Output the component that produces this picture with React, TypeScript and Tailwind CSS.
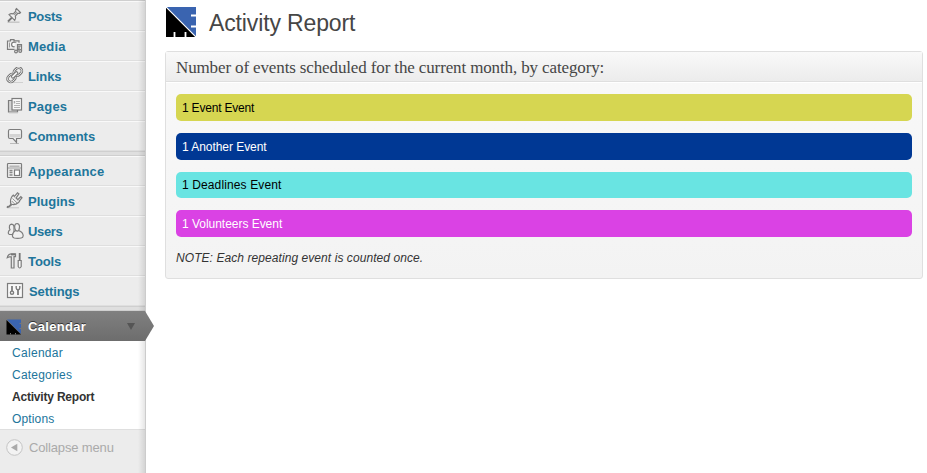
import React from "react";

const stroke = { fill: "none", stroke: "#7c7c7c", strokeWidth: 1.2 } as const;

const icons: Record<string, React.ReactNode> = {
  Posts: (
    <>
      <path d="M1.500 15.200h12" stroke="#c4c4c4" strokeWidth="1.400" />
      <path d="M2 14.500 6.500 10" stroke="#777" strokeWidth="1.800" />
      <path d="M3 7.600q2-1.700 4.300-.7l2.500-2.700q-.6-1.500.7-2.700l4 4q-1.200 1.400-2.700.8L9.300 9q1 2.300-.6 4.300z" {...stroke} fill="#eee" />
      <path d="m8.200 7.800 2.600-2.700" stroke="#999" strokeWidth="1.300" />
    </>
  ),
  Media: (
    <>
      <path d="M1.500 4h3V2.600h3.500v1.200h5v8.500h-11.500z" {...stroke} fill="#f1f1f1" />
      <circle cx="8" cy="7.500" r="2.400" {...stroke} fill="#fff" />
      <path d="M3.500 5.500v5" stroke="#999" />
      <path d="M10.200 15V7.300h5.500v6" stroke="#ececec" strokeWidth="3.200" fill="none" />
      <path d="M11.500 14.500V7.500h4v6.500M11.500 9h4" {...stroke} />
      <circle cx="10" cy="14.500" r="1.400" {...stroke} fill="#eee" />
      <circle cx="14.200" cy="14" r="1.400" {...stroke} fill="#eee" />
    </>
  ),
  Links: (
    <>
      <path d="M4 15.500h13" stroke="#d0d0d0" />
      <g transform="rotate(-45 8.500 8)">
        <rect x="0" y="4.800" width="8.500" height="6.400" rx="3" {...stroke} strokeWidth="2.600" stroke="#777" />
        <rect x="0" y="4.800" width="8.500" height="6.400" rx="3" {...stroke} strokeWidth=".9" stroke="#eee" />
        <rect x="9" y="4.800" width="8.500" height="6.400" rx="3" {...stroke} strokeWidth="2.600" stroke="#777" />
        <rect x="9" y="4.800" width="8.500" height="6.400" rx="3" {...stroke} strokeWidth=".9" stroke="#eee" />
        <rect x="4.800" y="6.600" width="7.800" height="2.800" rx="1.400" fill="#f5f5f5" stroke="#777" />
      </g>
    </>
  ),
  Pages: (
    <>
      <path d="M6 3.500H2.500v11.500h9V13" {...stroke} fill="#d5d5d5" />
      <path d="M3 16h9" stroke="#cfcfcf" />
      <rect x="6" y="1.500" width="9.500" height="11.500" {...stroke} fill="#f8f8f8" />
      <path d="M10 4.500h4M10 6.500h4M8 8.500h6M8 10.500h6" stroke="#aaa" strokeWidth=".9" />
      <path d="M7.700 4h1.500v2.500H7.700z" fill="#aaa" />
    </>
  ),
  Comments: (
    <>
      <path d="M4 16.500h9" stroke="#bbb" />
      <path d="M4 2.500h10q1.500 0 1.500 1.500v6q0 1.500-1.500 1.500h-3.500v4L7 11.500H4q-1.500 0-1.500-1.500V4Q2.500 2.500 4 2.500z" {...stroke} fill="#f4f4f4" />
      <path d="M3.500 7h11v2.500q0 1-1 1h-9q-1 0-1-1z" fill="#d4d4d4" />
    </>
  ),
  Appearance: (
    <>
      <rect x="1.500" y="1.500" width="14" height="14" rx=".8" {...stroke} fill="#eee" />
      <path d="M3.500 4.200h10" stroke="#aaa" strokeWidth="1.300" />
      <path d="M2 6h13" stroke="#888" strokeWidth=".8" />
      <rect x="8.500" y="8" width="5" height="5.500" {...stroke} fill="#fff" />
      <path d="M3.500 8.500h3M3.500 10.500h3M3.500 13h3" stroke="#888" strokeWidth="1.300" />
    </>
  ),
  Plugins: (
    <>
      <path d="M1 15.800h12" stroke="#c8c8c8" />
      <path d="M.8 14.800q2.200.5 3.500-1.300l1.500-1.800" {...stroke} strokeWidth="2" />
      <path d="M6 4.500Q3.500 8.500 5 12q3.500 2 7.500-1.500l1-1.200L7.300 3.200z" {...stroke} fill="#eee" />
      <path d="m8.300 4.700 3.200-3.900 1.400 1-2.900 4.400M11.500 8l3.300-3.500 1.200 1.200-3 3.700" {...stroke} fill="#f6f6f6" />
      <path d="m6.500 6.500 5 4.800M5.700 9l3 3" stroke="#888" strokeWidth=".9" />
    </>
  ),
  Users: (
    <>
      <path d="M4 7.800Q3 6 3.500 3.800q.7-1.600 2.200-1.600 1.800.2 2.300 2.300v6.500l-1.500 1.500H3.500Q2 12 2.300 10.300 2.800 8.500 4 7.800z" {...stroke} fill="#eee" />
      <path d="M9.700 8.500Q8.300 6.500 8.700 3.500q.7-2 2.300-2 2.300.2 2.500 2.800 0 2.300-.8 4.200 4.300 1.700 4.500 5.200-.2 2-2 2.300-3.500.8-7 0-1.800-.7-1.800-2.300.3-3.700 3.300-5.200z" {...stroke} fill="#f0f0f0" />
      <path d="M9.700 8.500q1.500 1.200 3 0" {...stroke} />
    </>
  ),
  Tools: (
    <>
      <path d="M1.200 5.800Q2 2 5 1.800h4.500v2.800H8V16H5.300V4.800H3.500z" {...stroke} fill="#e8e8e8" />
      <path d="M5 2.500h4" stroke="#777" strokeWidth="1.700" />
      <path d="M13.700 1v8" stroke="#777" strokeWidth="1.800" />
      <path d="M12.200 8.500h3v6q-1.500 3-3 0z" {...stroke} fill="#f6f6f6" />
    </>
  ),
  Settings: (
    <>
      <rect x="1.500" y="1.500" width="15" height="14" {...stroke} fill="#f8f8f8" />
      <path d="M6 4v5M12 8v5" stroke="#777" strokeWidth="1.700" />
      <circle cx="6" cy="10.700" r="1.600" {...stroke} strokeWidth="1.400" />
      <path d="M10.200 4v2q0 1.700 1.800 1.700T13.800 6V4" {...stroke} strokeWidth="1.400" />
    </>
  ),
};

function Logo() {
  return (
    <svg width="30" height="30" viewBox="0 0 30 30" className="block shrink-0">
      <path d="M0 0h30v30z" fill="#3a64b0" />
      <path d="M0 0v30h30z" fill="#000" />
      <path d="m0 0 30 30" stroke="#fff" strokeWidth="1.200" />
      <path d="M25 8.500h5M25 19.500h5M8.500 25v5M19.500 25v5" stroke="#fff" strokeWidth="1.800" />
    </svg>
  );
}

function SmallLogo() {
  return (
    <svg width="16" height="16" viewBox="0 0 16 16" className="block shrink-0">
      <path d="M1 .5h14V15z" fill="#3a64b0" />
      <path d="M.5 1v14.500H15z" fill="#000" />
      <path d="M13.500 4.500H15M13.500 9.500H15M4.500 14v1.500M9.500 14v1.500" stroke="#777" />
    </svg>
  );
}

type Entry = { name: string; label: string };
function MenuRow({ name, label }: Entry) {
  return (
    <div className="flex h-[30px] items-start border-t border-b border-t-[#f9f9f9] border-b-[#dfdfdf] pt-[5px] pl-[6px]">
      <svg width="18" height="18" viewBox="0 0 18 18" className="shrink-0">{icons[name]}</svg>
      <span className={"pt-px text-[13px] leading-[18px] font-bold text-[#21759b] " + label}>{name}</span>
    </div>
  );
}

const content: Entry[] = [
  { name: "Posts", label: "ml-[4px] tracking-[-0.3px]" },
  { name: "Media", label: "ml-[4px] tracking-[0.15px]" },
  { name: "Links", label: "ml-[4px] tracking-[-0.1px]" },
  { name: "Pages", label: "ml-[4px] tracking-[0.2px]" },
  { name: "Comments", label: "ml-[4px] tracking-[0px]" },
];
const admin: Entry[] = [
  { name: "Appearance", label: "ml-[4px] tracking-[0.2px]" },
  { name: "Plugins", label: "ml-[4px] tracking-[0px]" },
  { name: "Users", label: "ml-[4px] tracking-[-0.35px]" },
  { name: "Tools", label: "ml-[4px] tracking-[-0.1px]" },
  { name: "Settings", label: "ml-[5px] tracking-[-0.1px]" },
];

function Separator() {
  return <div className="h-[5px] border-t border-b border-t-[#cfcfcf] border-b-[#cfcfcf] bg-[#dfdfdf]" />;
}

const bars = [
  { text: "1 Event Event", style: "h-[27px] bg-[#d6d651] text-black tracking-[-0.2px]" },
  { text: "1 Another Event", style: "h-[27px] bg-[#003894] text-white tracking-[-0.05px]" },
  { text: "1 Deadlines Event", style: "h-[26px] bg-[#69e4e2] text-black tracking-[0.12px]" },
  { text: "1 Volunteers Event", style: "h-[27px] bg-[#da42e4] text-white tracking-[-0.03px]" },
];

export default function App() {
  return (
    <div className="flex h-[473px] w-[927px] overflow-hidden bg-white font-['Liberation_Sans',Arial,sans-serif]">
      <nav className="relative w-[146px] shrink-0 border-r border-[#cccccc] bg-[#ececec]">
        <div className="h-px bg-[#cfcfcf]" />
        {content.map((e) => <MenuRow key={e.name} {...e} />)}
        <Separator />
        {admin.map((e) => <MenuRow key={e.name} {...e} />)}
        <Separator />
        <div className="flex h-[30px] items-start bg-linear-to-b from-[#808080] to-[#6d6d6d] pt-2 pl-[6px]">
          <SmallLogo />
          <span className="-mt-px ml-[6px] text-[13px] leading-[18px] font-bold tracking-[0.3px] text-white [text-shadow:0_-1px_0_#333]">Calendar</span>
          <svg width="8" height="7" viewBox="0 0 8 7" className="mt-1 mr-[10px] ml-auto"><path d="M0 0h8L4 7z" fill="#555" /></svg>
        </div>
        <div className="flex h-[89px] flex-col border-b border-[#dfdfdf] bg-white pl-3 text-[12px] leading-[22px] text-[#21759b]">
          <span className="mt-px tracking-[0.3px]">Calendar</span>
          <span className="tracking-[0.22px]">Categories</span>
          <span className="font-bold tracking-[-0.2px] text-[#333]">Activity Report</span>
          <span className="tracking-[0.15px]">Options</span>
        </div>
        <div className="flex h-[34px] items-center pl-[6px] text-[#aaa]">
          <svg width="17" height="17" viewBox="0 0 17 17">
            <circle cx="8.500" cy="8.500" r="7.800" fill="#f3f3f3" stroke="#c4c4c4" />
            <path d="M11.300 4.800v7.400L5 8.500z" fill="#aaa" />
          </svg>
          <span className="mt-[2px] ml-[6px] text-[13px] leading-[18px] tracking-[-0.15px]">Collapse menu</span>
        </div>
        <div className="pointer-events-none absolute top-0 right-0 h-[311px] w-[7px] bg-linear-to-r from-transparent to-black/10" />
        <div className="pointer-events-none absolute top-[341px] right-0 h-[132px] w-[7px] bg-linear-to-r from-transparent to-black/10" />
        <svg width="9" height="30" viewBox="0 0 9 30" className="absolute top-[311px] left-[145px]">
          <defs><linearGradient id="arrow" x2="0" y2="1"><stop stopColor="#808080" /><stop offset="1" stopColor="#6d6d6d" /></linearGradient></defs>
          <path d="M0 0 9 15 0 30z" fill="url(#arrow)" />
        </svg>
      </nav>
      <main className="flex flex-1 flex-col pt-[7px] pr-1 pl-[19px]">
        <header className="flex h-[44px] items-start pl-px">
          <Logo />
          <h1 className="ml-[13px] text-[23px] leading-[32px] tracking-[-0.13px] text-[#464646]">Activity Report</h1>
        </header>
        <section className="h-[228px] rounded-[3px] border border-[#dfdfdf] bg-linear-to-b from-[#f9f9f9] to-[#f3f3f3]">
          <h2 className="h-[30px] border-b border-[#dfdfdf] bg-linear-to-b from-[#f9f9f9] to-[#ececec] pl-[10px] font-[Georgia,'Liberation_Serif',serif] text-[17px] leading-[32px] tracking-[-0.13px] whitespace-nowrap text-[#464646] shadow-[0_1px_0_#fff]">
            Number of events scheduled for the current month, by category:
          </h2>
          <div className="flex flex-col gap-3 px-[10px] pt-3 text-[12px]">
            {bars.map((b) => (
              <div key={b.text} className={"flex items-center rounded-[5px] pl-[6px] " + b.style}>{b.text}</div>
            ))}
            <p className="leading-[18px] tracking-[0.07px] text-[#333] italic">NOTE: Each repeating event is counted once.</p>
          </div>
        </section>
      </main>
    </div>
  );
}
